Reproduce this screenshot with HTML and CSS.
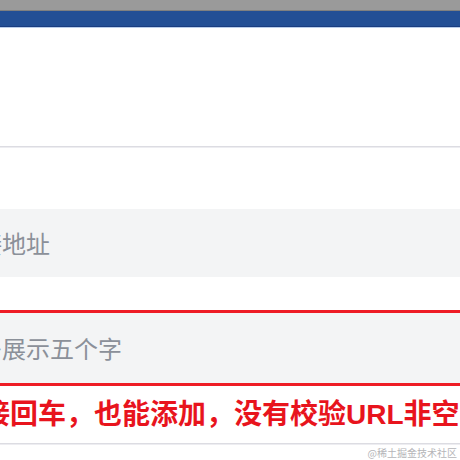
FILE: index.html
```html
<!DOCTYPE html>
<html lang="zh-CN">
<head>
<meta charset="utf-8">
<link rel="stylesheet" href="styles.css">
</head>
<body>
<div class="page">
  <div class="topbar"></div>
  <div class="navbar"></div>
  <div class="blank"></div>
  <div class="divider"></div>
  <div class="gap-a"></div>
  <div class="field"><span class="placeholder">链接地址</span></div>
  <div class="gap-b"></div>
  <div class="field field--marked"><span class="placeholder">最多展示五个字</span></div>
  <div class="note">直接回车，也能添加，没有校验URL非空</div>
  <div class="divider"></div>
  <div class="footer"><span class="watermark">@稀土掘金技术社区</span></div>
</div>
</body>
</html>
```

FILE: styles.css
```css
html, body {
  margin: 0;
  padding: 0;
  background: #ffffff;
  overflow: hidden;
  width: 460px;
  height: 460px;
}

.page {
  width: 600px;
  margin-left: -60px;
  display: flex;
  flex-direction: column;
  font-family: "Noto Sans CJK SC", "Noto Sans", sans-serif;
}

.topbar {
  height: 10px;
  background: #9a9a9a;
  border-bottom: 1px solid #808080;
}

.navbar {
  height: 15px;
  background: #234f95;
  border-bottom: 1px solid #1a3d80;
  box-shadow: 0 1px 0 #b9cdea;
}

.blank {
  height: 119px;
}

.divider {
  height: 1px;
  background: #dcdce2;
  border-bottom: 1px solid #ededf1;
}

.gap-a {
  height: 61px;
}

.field {
  height: 68px;
  background: #f3f4f5;
  display: flex;
  align-items: center;
  padding-left: 14px;
}

.placeholder {
  font-size: 24px;
  color: #8b9099;
  line-height: 1;
}

.gap-b {
  height: 33px;
}

.field--marked {
  height: 70px;
  border-top: 3px solid #ee1c25;
  border-bottom: 3px solid #ee1c25;
}

.note {
  height: 57px;
  display: flex;
  align-items: center;
  padding-left: 14px;
  font-family: "Liberation Sans", "Noto Sans CJK SC", sans-serif;
  font-size: 28px;
  font-weight: 700;
  color: #e8141d;
  white-space: nowrap;
  line-height: 1;
}

.footer {
  width: 460px;
  margin-left: 60px;
  height: 15px;
  display: flex;
  justify-content: flex-end;
  align-items: center;
}

.watermark {
  font-size: 10px;
  color: #b5b5b8;
  padding-right: 3px;
  line-height: 1;
  white-space: nowrap;
  font-family: "Noto Sans CJK SC", serif;
}
```
